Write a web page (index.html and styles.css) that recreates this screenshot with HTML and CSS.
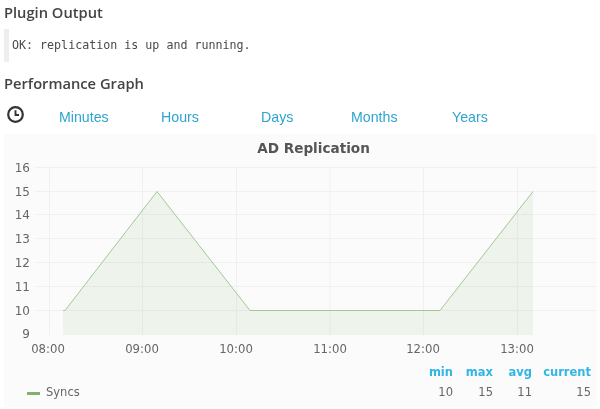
FILE: index.html
```html
<!DOCTYPE html>
<html lang="en">
<head>
<meta charset="utf-8">
<title>Performance Graph</title>
<link rel="stylesheet" href="styles.css">
</head>
<body>
<h4 class="heading">Plugin Output</h4>
<pre class="output">OK: replication is up and running.</pre>
<h4 class="heading heading-graph">Performance Graph</h4>
<nav class="tabs">
  <svg class="clock" viewBox="0 0 18 18" width="18" height="18" aria-hidden="true">
    <circle cx="9.500" cy="9.500" r="7.300" fill="none" stroke="#333" stroke-width="2.200"/>
    <path d="M9.500 5.200V10H13" fill="none" stroke="#333" stroke-width="1.900"/>
  </svg>
  <div class="tab-list">
    <a class="tab">Minutes</a>
    <a class="tab">Hours</a>
    <a class="tab">Days</a>
    <a class="tab">Months</a>
    <a class="tab">Years</a>
  </div>
</nav>
<section class="panel">
  <h5 class="panel-title">AD Replication</h5>
  <svg class="chart" width="593" height="208" viewBox="0 0 593 208">
    <g class="grid">
      <path d="M31 11.5H593M31 35.500H593M31 58.500H593M31 82.500H593M31 106.500H593M31 130.500H593M31 154.500H593"/>
      <path d="M45.500 11V179M138.500 11V179M232.500 11V179M326 11V179M419.500 11V179M513.500 11V179"/>
    </g>
    <path class="area" d="M59 154.500H61L153 35.500L246 154.500H436L529 35.500V179H59Z"/>
    <path class="line" d="M59 154.500H61L153 35.500L246 154.500H436L529 35.500"/>
    <g class="y-axis">
      <text x="26" y="16">16</text>
      <text x="26" y="39.500">15</text>
      <text x="26" y="63">14</text>
      <text x="26" y="87">13</text>
      <text x="26" y="111">12</text>
      <text x="26" y="135">11</text>
      <text x="26" y="158.500">10</text>
      <text x="26" y="182">9</text>
    </g>
    <g class="x-axis">
      <text x="44" y="197">08:00</text>
      <text x="138" y="197">09:00</text>
      <text x="232" y="197">10:00</text>
      <text x="326" y="197">11:00</text>
      <text x="419" y="197">12:00</text>
      <text x="513" y="197">13:00</text>
    </g>
  </svg>
  <div class="legend">
    <div class="series"><span class="swatch"></span><span>Syncs</span></div>
    <div class="stat stat-min"><b>min</b><span>10</span></div>
    <div class="stat stat-max"><b>max</b><span>15</span></div>
    <div class="stat stat-avg"><b>avg</b><span>11</span></div>
    <div class="stat stat-cur"><b>current</b><span>15</span></div>
  </div>
</section>
</body>
</html>
```
FILE: styles.css
```css
html, body { margin: 0; padding: 0; background: #fff; }
body { width: 600px; height: 409px; overflow: hidden; font-family: "Open Sans", sans-serif; color: #555; filter: blur(0.3px); }
.heading { margin: 0; padding: 3px 0 0 4px; font-size: 14.7px; line-height: 19px; font-weight: 600; color: #444; }
.output {
  margin: 7px 0 0 4px; height: 33px; box-sizing: border-box; border-left: 5px solid #eee;
  padding: 0 0 0 3px; font: 11.67px/33px "DejaVu Sans Mono", monospace; color: #4a4a4a;
}
.heading-graph { padding-top: 12px; }
.tabs { display: flex; align-items: flex-start; height: 41px; padding: 12px 0 0 6px; box-sizing: border-box; }
.clock { flex: none; }
.tab-list { display: grid; grid-template-columns: 102px 100px 90px 101px auto; margin: 2px 0 0 35px; }
.tab { font: 14.2px/20px "Liberation Sans", Arial, sans-serif; color: #2fa4d0; }
.panel { margin: 0 3px 0 4px; height: 273px; background: #fbfbfb; border-radius: 3px; font-family: "DejaVu Sans", sans-serif; }
.panel-title { margin: 0; padding: 6px 0 0 26px; height: 22px; box-sizing: border-box; text-align: center; font-size: 13.6px; line-height: 16px; font-weight: 700; color: #555; }
.chart { display: block; }
.grid path { fill: none; stroke: #f0f0f0; stroke-width: 1; }
.area { fill: #7eb26d; fill-opacity: .1; }
.line { fill: none; stroke: #a3c896; stroke-width: 1; }
.y-axis text { font-size: 12px; fill: #666; text-anchor: end; }
.x-axis text { font-size: 11.7px; fill: #666; text-anchor: middle; }
.legend { display: flex; margin-top: -2px; font-size: 11.5px; line-height: 20px; color: #666; }
.series { display: flex; align-items: center; align-self: flex-end; padding-left: 23px; width: 421px; box-sizing: border-box; }
.swatch { width: 13px; height: 3px; background: #7eb26d; margin-right: 6px; margin-top: 2px; }
.stat { display: flex; flex-direction: column; text-align: right; }
.stat b { color: #33b5e5; font-weight: 700; }
.stat-min { flex: 0 0 28px; }
.stat-max { flex: 0 0 40px; }
.stat-avg { flex: 0 0 39px; }
.stat-cur { flex: 0 0 59px; }
```
